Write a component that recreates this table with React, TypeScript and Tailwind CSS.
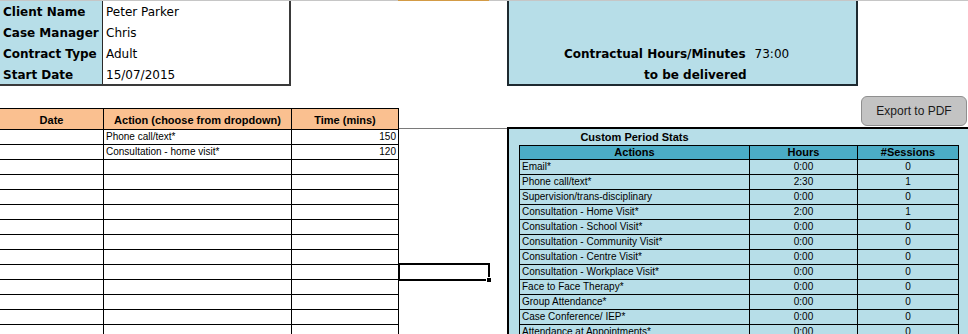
const clientInfo = [
  { label: 'Client Name', value: 'Peter Parker', h: 'h-[21px]' },
  { label: 'Case Manager', value: 'Chris', h: 'h-[21px]' },
  { label: 'Contract Type', value: 'Adult', h: 'h-[21px]' },
  { label: 'Start Date', value: '15/07/2015', h: 'h-[20px]' },
]

const logRows = [
  { date: '', action: 'Phone call/text*', mins: '150' },
  { date: '', action: 'Consultation - home visit*', mins: '120' },
  ...Array.from({ length: 12 }, () => ({ date: '', action: '', mins: '' })),
]

const stats = [
  ['Email*', '0:00', '0'],
  ['Phone call/text*', '2:30', '1'],
  ['Supervision/trans-disciplinary', '0:00', '0'],
  ['Consultation - Home Visit*', '2:00', '1'],
  ['Consultation - School Visit*', '0:00', '0'],
  ['Consultation - Community Visit*', '0:00', '0'],
  ['Consultation - Centre Visit*', '0:00', '0'],
  ['Consultation - Workplace Visit*', '0:00', '0'],
  ['Face to Face Therapy*', '0:00', '0'],
  ['Group Attendance*', '0:00', '0'],
  ['Case Conference/ IEP*', '0:00', '0'],
  ['Attendance at Appointments*', '0:00', '0'],
]

function ClientInfo() {
  return (
    <div className="flex h-[85px] w-[291px] flex-col border-r-2 border-b-2 border-[#3a3a3a] font-['DejaVu_Sans',sans-serif] text-[12px]">
      {clientInfo.map((row) => (
        <div key={row.label} className={`flex ${row.h}`}>
          <div className="flex w-[103px] items-center border-r border-[#2a2a2a] bg-[#b7dee8] pt-px pl-[3px] font-bold">
            {row.label}
          </div>
          <div className="flex flex-1 items-center pt-px pl-[3px]">{row.value}</div>
        </div>
      ))}
    </div>
  )
}

function ContractBox() {
  return (
    <div className="ml-[216px] flex h-[85px] w-[351px] flex-col justify-end border-x-2 border-b-2 border-[#1e2a30] bg-[#b7dee8] font-['DejaVu_Sans',sans-serif] text-[12px]">
      <div className="flex h-[20px] items-center pl-[55px]">
        <span className="font-bold">Contractual Hours/Minutes</span>
        <span className="ml-[9px]">73:00</span>
      </div>
      <div className="flex h-[20px] items-center pt-[2px] pl-[135px] font-bold">
        to be delivered
      </div>
    </div>
  )
}

function LogTable() {
  return (
    <div className="mt-[22px] w-[399px] font-['Liberation_Sans',Arial,sans-serif]">
      <div className="grid h-[22px] grid-cols-[104px_188px_107px] border-y border-black bg-[#fac090] text-[11px] font-bold">
        {['Date', 'Action (choose from dropdown)', 'Time (mins)'].map((h) => (
          <div key={h} className="flex items-end justify-center border-r border-black pb-[2px] leading-[14px]">
            {h}
          </div>
        ))}
      </div>
      {logRows.map((row, i) => (
        <div key={i} className="grid h-[15px] grid-cols-[104px_188px_107px] text-[10px] leading-[14px]">
          <div className="border-r border-b border-black px-[2px]">{row.date}</div>
          <div className="truncate border-r border-b border-black px-[2px]">{row.action}</div>
          <div className="border-r border-b border-black px-[2px] text-right">{row.mins}</div>
        </div>
      ))}
    </div>
  )
}

function StatsPanel() {
  return (
    <div className="h-[207px] border-t-2 border-l-2 border-black bg-[#b7dee8] font-['Liberation_Sans',Arial,sans-serif]">
      <div className="ml-[10px] flex h-[16px] w-[231px] items-center justify-center text-[11px] font-bold">
        Custom Period Stats
      </div>
      <div className="ml-[10px] w-[440px] border-t border-l border-black">
        <div className="grid h-[14px] grid-cols-[230px_108px_101px] bg-[#4bacc6] text-[11px] font-bold leading-[13px]">
          {['Actions', 'Hours', '#Sessions'].map((h) => (
            <div key={h} className="border-r border-b border-black text-center">
              {h}
            </div>
          ))}
        </div>
        {stats.map(([action, hours, sessions]) => (
          <div key={action} className="grid h-[15px] grid-cols-[230px_108px_101px] text-[10px] leading-[14px]">
            <div className="truncate border-r border-b border-black px-[2px]">{action}</div>
            <div className="border-r border-b border-black text-center">{hours}</div>
            <div className="border-r border-b border-black text-center">{sessions}</div>
          </div>
        ))}
      </div>
    </div>
  )
}

export default function App() {
  return (
    <div className="relative h-[334px] w-[968px] overflow-hidden bg-white text-black">
      <div className="flex h-px">
        <div className="w-[398px] bg-[#c6c6c6]" />
        <div className="w-[91px] bg-[#d39b45]" />
        <div className="flex-1 bg-[#c6c6c6]" />
      </div>

      <div className="flex items-start">
        <ClientInfo />
        <ContractBox />
      </div>

      <div className="flex">
        <LogTable />
        <div className="flex w-[108px] flex-col">
          <div className="mt-[42px] h-px bg-[#7a7a7a]" />
        </div>
        <div className="flex w-[461px] flex-col">
          <div className="flex h-[41px] items-start justify-end pt-[10px] pr-[1px]">
            <button className="h-[30px] w-[106px] rounded-[6px] border border-[#8f8f8f] bg-[#c3c3c3] font-['Liberation_Sans',Arial,sans-serif] text-[12px] text-[#1a1a1a]">
              Export to PDF
            </button>
          </div>
          <StatsPanel />
        </div>
      </div>

      {/* active cell selection */}
      <div className="absolute top-[263px] left-[398px] h-[18px] w-[92px] border-2 border-black">
        <div className="absolute -right-[4px] -bottom-[4px] h-[6px] w-[6px] border border-white bg-black" />
      </div>
    </div>
  )
}
